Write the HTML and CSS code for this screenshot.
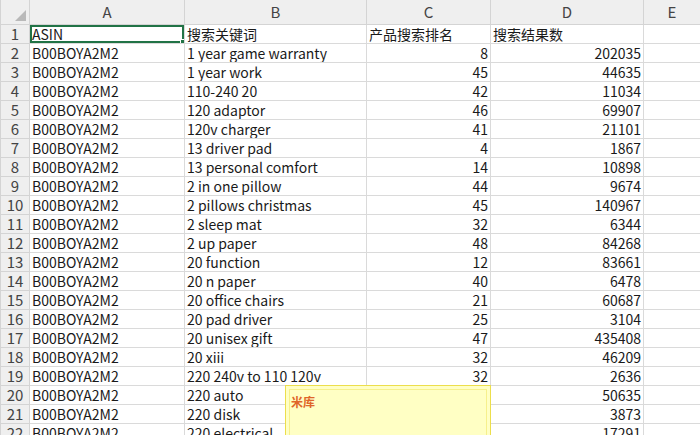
FILE: index.html
```html
<!DOCTYPE html>
<html lang="zh-CN">
<head>
  <meta charset="UTF-8">
  <title>Sheet1</title>
  <link rel="stylesheet" href="styles.css">
</head>
<body>

<div class="sheet">
  <table class="grid">
    <colgroup>
      <col class="c-head"><col class="c-a"><col class="c-b"><col class="c-c"><col class="c-d"><col class="c-e">
    </colgroup>
    <thead>
      <tr class="col-heads">
        <th class="corner"><span class="tri"></span></th>
        <th class="active-col">A</th><th>B</th><th>C</th><th>D</th><th>E</th>
      </tr>
    </thead>
    <tbody id="rows">
      <tr><th class="active-row">1</th><td class="sel">ASIN</td><td>搜索关键词</td><td>产品搜索排名</td><td>搜索结果数</td><td></td></tr>
    </tbody>
  </table>

  <!-- comment popup -->
  <div class="note">
    <div class="note-inner">米库</div>
  </div>
</div>

<script>
var data = [
  ["1 year game warranty", 8, 202035],
  ["1 year work", 45, 44635],
  ["110-240 20", 42, 11034],
  ["120 adaptor", 46, 69907],
  ["120v charger", 41, 21101],
  ["13 driver pad", 4, 1867],
  ["13 personal comfort", 14, 10898],
  ["2 in one pillow", 44, 9674],
  ["2 pillows christmas", 45, 140967],
  ["2 sleep mat", 32, 6344],
  ["2 up paper", 48, 84268],
  ["20 function", 12, 83661],
  ["20 n paper", 40, 6478],
  ["20 office chairs", 21, 60687],
  ["20 pad driver", 25, 3104],
  ["20 unisex gift", 47, 435408],
  ["20 xiii", 32, 46209],
  ["220 240v to 110 120v", 32, 2636],
  ["220 auto", 0, 50635],
  ["220 disk", 0, 3873],
  ["220 electrical", 0, 17291]
];

var body = document.getElementById("rows");
for (var i = 0; i < data.length; i++) {
  var r = data[i];
  var tr = document.createElement("tr");
  tr.innerHTML =
    "<th>" + (i + 2) + "</th>" +
    "<td>B00BOYA2M2</td>" +
    "<td>" + r[0] + "</td>" +
    "<td class='num'>" + (r[1] ? r[1] : "") + "</td>" +
    "<td class='num'>" + r[2] + "</td>" +
    "<td></td>";
  body.appendChild(tr);
}
</script>
</body>
</html>
```

FILE: styles.css
```css
body { margin: 0; background: #fff; overflow: hidden; }
.sheet { position: relative; width: 700px; height: 435px; overflow: hidden; }

.grid {
  border-collapse: collapse;
  table-layout: fixed;
  width: 700px;
  font-family: "Noto Sans CJK SC", "DejaVu Sans", sans-serif;
  font-size: 14px;
  color: #1a1a1a;
}
.c-head { width: 29px; }
.c-a { width: 155px; }
.c-b { width: 182px; }
.c-c { width: 124px; }
.c-d { width: 153px; }
.c-e { width: 57px; }

.grid td, .grid th {
  height: 18px; padding: 0 2px;
  border: 1px solid #dadada;
  white-space: nowrap; overflow: hidden;
  line-height: 18px;
  font-weight: normal;
  vertical-align: bottom;
}
.grid td { text-align: left; padding-left: 2px; }
.grid td.num { text-align: right; padding-right: 2px; }

.grid tbody th {
  background: #efefef;
  color: #444;
  text-align: center;
  border-color: #d4d4d4;
  font-size: 15px;
}
.col-heads th {
  height: 24px;
  background: #efefef;
  color: #444;
  text-align: center;
  vertical-align: middle;
  border-color: #d4d4d4;
  border-top: none;
  line-height: 24px;
  font-size: 15px;
}
.corner { position: relative; }
.tri {
  position: absolute; right: 3px; bottom: 3px;
  width: 0; height: 0;
  border-left: 11px solid transparent;
  border-bottom: 11px solid #b9b9b9;
}

.grid td.sel {
  box-shadow: inset 0 0 0 2px #217346;
  position: relative;
}
.grid td.sel::after {
  content: ""; position: absolute; right: -3px; bottom: -3px;
  width: 5px; height: 5px;
  background: #217346; border: 1px solid #fff;
}

.note {
  position: absolute; left: 285px; top: 385px;
  width: 206px; height: 70px;
  background: #ffffc4;
  border: 1px solid #ecde4c;
  box-sizing: border-box;
  padding: 3px;
}
.note-inner {
  height: 100%;
  border: 1px solid #f6f08c;
  padding: 6px 1px;
  font-family: "Noto Sans CJK SC", sans-serif;
  font-size: 12px; font-weight: bold;
  color: #e0662a;
  line-height: 12px;
}
```
